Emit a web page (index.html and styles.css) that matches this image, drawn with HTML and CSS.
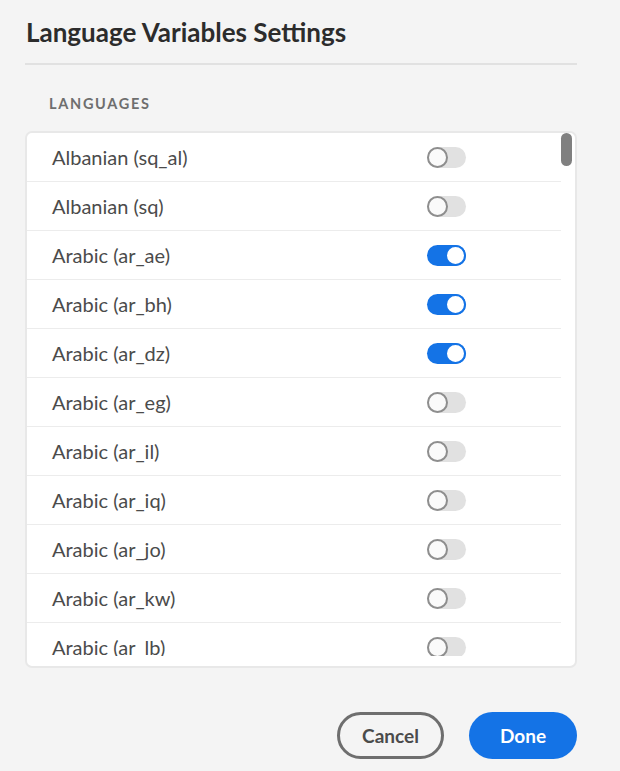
FILE: index.html
```html
<!DOCTYPE html>
<html lang="en">
<head>
<meta charset="utf-8">
<title>Language Variables Settings</title>
<link rel="stylesheet" href="styles.css">
</head>
<body>
<div class="dialog">
  <h1 class="title">Language Variables Settings</h1>
  <div class="divider"></div>
  <div class="section-label">LANGUAGES</div>
  <div class="list-box">
    <div class="list-main">
      <div class="rows">
        <div class="row"><span class="name">Albanian (sq_al)</span><span class="switch"><span class="knob"></span></span></div>
        <div class="row"><span class="name">Albanian (sq)</span><span class="switch"><span class="knob"></span></span></div>
        <div class="row"><span class="name">Arabic (ar_ae)</span><span class="switch on"><span class="knob"></span></span></div>
        <div class="row"><span class="name">Arabic (ar_bh)</span><span class="switch on"><span class="knob"></span></span></div>
        <div class="row"><span class="name">Arabic (ar_dz)</span><span class="switch on"><span class="knob"></span></span></div>
        <div class="row"><span class="name">Arabic (ar_eg)</span><span class="switch"><span class="knob"></span></span></div>
        <div class="row"><span class="name">Arabic (ar_il)</span><span class="switch"><span class="knob"></span></span></div>
        <div class="row"><span class="name">Arabic (ar_iq)</span><span class="switch"><span class="knob"></span></span></div>
        <div class="row"><span class="name">Arabic (ar_jo)</span><span class="switch"><span class="knob"></span></span></div>
        <div class="row"><span class="name">Arabic (ar_kw)</span><span class="switch"><span class="knob"></span></span></div>
        <div class="row"><span class="name">Arabic (ar_lb)</span><span class="switch"><span class="knob"></span></span></div>
      </div>
    </div>
    <div class="scroll-track"><div class="scroll-thumb"></div></div>
  </div>
  <div class="actions">
    <button class="btn btn-secondary">Cancel</button>
    <button class="btn btn-primary">Done</button>
  </div>
</div>
</body>
</html>
```

FILE: styles.css
```css
* { box-sizing: border-box; }
html, body { margin: 0; padding: 0; }
body {
  background: #f4f4f4;
  font-family: Lato, "Noto Sans", "Liberation Sans", sans-serif;
  color: #2c2c2c;
  width: 620px;
  height: 771px;
  overflow: hidden;
}
.dialog {
  padding: 14px 43px 0 25px;
}
.title {
  margin: 0;
  font-size: 26px;
  line-height: 36px;
  font-weight: 700;
  color: #2c2c2c;
  padding-left: 1px;
}
.divider {
  height: 2px;
  background: #e1e1e1;
  margin-top: 13px;
}
.section-label {
  margin-top: 31px;
  padding-left: 24px;
  font-size: 14.5px;
  line-height: 16px;
  font-weight: 700;
  letter-spacing: 1.7px;
  color: #6e6e6e;
}
.list-box {
  margin-top: 19px;
  height: 537px;
  background: #fff;
  border: 2px solid #e8e8e8;
  border-radius: 7px;
  display: flex;
  overflow: hidden;
}
.list-main {
  flex: 1;
  padding-bottom: 10px;
}
.rows {
  height: 523px;
  overflow: hidden;
}
.row {
  height: 49px;
  border-bottom: 1px solid #ececec;
  display: flex;
  align-items: center;
  padding-left: 25px;
}
.name {
  width: 375px;
  font-size: 20px;
  color: #4b4b4b;
}
.switch {
  width: 39px;
  height: 21px;
  border-radius: 11px;
  background: #e1e1e1;
  display: flex;
  justify-content: flex-start;
}
.knob {
  width: 21px;
  height: 21px;
  border-radius: 50%;
  border: 2px solid #8e8e8e;
  background: #fafafa;
}
.switch.on {
  background: #1473e6;
  justify-content: flex-end;
}
.switch.on .knob {
  border-color: #1473e6;
  background: #fff;
}
.scroll-track {
  width: 14px;
  padding: 0 3px 0 0;
}
.scroll-thumb {
  width: 11px;
  height: 33px;
  border-radius: 6px;
  background: #808080;
}
.actions {
  margin-top: 44px;
  display: flex;
  justify-content: flex-end;
  gap: 25px;
}
.btn {
  height: 47px;
  border-radius: 24px;
  font-family: Lato, "Noto Sans", "Liberation Sans", sans-serif;
  font-size: 19px;
  font-weight: 700;
  padding: 0;
  cursor: pointer;
}
.btn-secondary {
  width: 107px;
  background: transparent;
  border: 3px solid #6e6e6e;
  color: #4b4b4b;
}
.btn-primary {
  width: 108px;
  background: #1473e6;
  border: none;
  color: #fff;
}
```
